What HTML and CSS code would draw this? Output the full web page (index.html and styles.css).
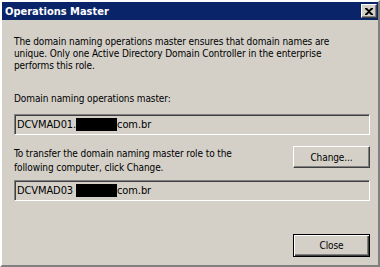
FILE: index.html
```html
<!DOCTYPE html>
<html>
<head>
<meta charset="utf-8">
<link rel="stylesheet" href="styles.css">
</head>
<body>
<div class="window">
  <div class="titlebar">
    <span class="title">Operations Master</span>
    <span class="xbtn"><svg width="8" height="7" viewBox="0 0 8 7"><path d="M0 0h2l2 2 2-2h2v1L5 3.5 8 6v1H6L4 5 2 7H0V6l3-2.5L0 1z" fill="#000"/></svg></span>
  </div>
  <div class="content">
    <p class="desc">The domain naming operations master ensures that domain names are unique. Only one Active Directory Domain Controller in the enterprise performs this role.</p>
    <div class="label">Domain naming operations master:</div>
    <div class="field">DCVMAD01.<span class="redact"></span>com.br</div>
    <div class="row">
      <div class="label2">To transfer the domain naming master role to the following computer, click Change.</div>
      <button class="btn">Change...</button>
    </div>
    <div class="field">DCVMAD03<span class="redact r2"></span>com.br</div>
    <div class="footer">
      <button class="btn default">Close</button>
    </div>
  </div>
</div>
</body>
</html>
```

FILE: styles.css
```css
html, body {
  margin: 0;
  padding: 0;
  background: #d4d0c8;
}
.window {
  width: 380px;
  height: 267px;
  box-sizing: border-box;
  background: #d4d0c8;
  border-top: 2px solid #ffffff;
  border-left: 2px solid #ffffff;
  border-right: 2px solid #808080;
  border-bottom: 2px solid #808080;
  font-family: "DejaVu Sans Condensed", "Liberation Sans", Arial, sans-serif;
  font-stretch: condensed;
  font-size: 10px;
  letter-spacing: -0.1px;
  color: #000;
  display: flex;
  flex-direction: column;
}
.titlebar {
  height: 18px;
  background: #0a246a;
  display: flex;
  align-items: center;
  justify-content: space-between;
  padding: 0 1px 0 3px;
}
.title {
  color: #fff;
  font-weight: bold;
  font-size: 11px;
  letter-spacing: 0;
}
.xbtn {
  width: 16px;
  height: 14px;
  box-sizing: border-box;
  background: #d4d0c8;
  border-top: 1px solid #fff;
  border-left: 1px solid #fff;
  border-right: 1px solid #404040;
  border-bottom: 1px solid #404040;
  box-shadow: inset -1px -1px 0 #808080;
  display: flex;
  align-items: center;
  justify-content: center;
}
.content {
  padding: 16px 8px 0 12px;
  flex: 1;
  display: flex;
  flex-direction: column;
}
.desc {
  margin: 0;
  line-height: 12px;
  width: 335px;
}
.label {
  margin-top: 20px;
  line-height: 13px;
}
.field {
  margin-top: 9px;
  height: 21px;
  box-sizing: border-box;
  border-top: 1px solid #808080;
  border-left: 1px solid #808080;
  border-right: 1px solid #fff;
  border-bottom: 1px solid #fff;
  box-shadow: inset 1px 1px 0 #404040, inset -1px -1px 0 #d4d0c8;
  padding: 0 2px 0 2px;
  display: flex;
  align-items: center;
  font-size: 11px;
}
.redact {
  display: inline-block;
  width: 41px;
  height: 13px;
  background: #000;
}
.r2 {
  margin-left: 3px;
}
.row {
  margin-top: 11px;
  display: flex;
  justify-content: space-between;
  align-items: flex-start;
}
.label2 {
  width: 240px;
  line-height: 14px;
  padding-top: 1px;
}
.btn {
  width: 77px;
  height: 22px;
  box-sizing: border-box;
  background: #d4d0c8;
  font-family: inherit;
  font-stretch: inherit;
  font-size: 10px;
  letter-spacing: inherit;
  color: #000;
  padding: 0;
  border-top: 1px solid #fff;
  border-left: 1px solid #fff;
  border-right: 1px solid #404040;
  border-bottom: 1px solid #404040;
  box-shadow: inset -1px -1px 0 #808080;
}
.row + .field {
  margin-top: 5px;
}
.footer {
  margin-top: auto;
  margin-bottom: 8px;
  display: flex;
  justify-content: flex-end;
}
.btn.default {
  border: 1px solid #000;
  box-shadow: inset 1px 1px 0 #fff, inset -1px -1px 0 #404040, inset -2px -2px 0 #808080;
  height: 23px;
}
```
